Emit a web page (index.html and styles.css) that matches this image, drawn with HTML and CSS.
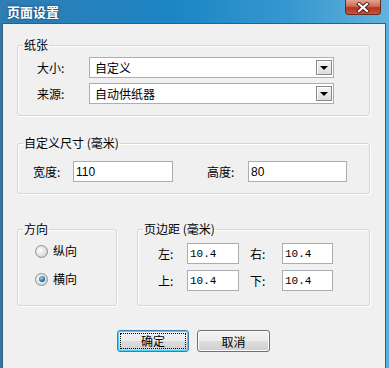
FILE: index.html
```html
<!DOCTYPE html>
<html lang="zh-CN">
<head>
    <meta charset="UTF-8" />
    <title>页面设置</title>
    <link rel="stylesheet" href="styles.css">
</head>
<body>
<div class="window">
    <div class="titlebar">
        <span class="title">页面设置</span>
        <span class="close-btn">
            <svg width="14" height="11" viewBox="0 0 14 11">
                <path d="M3 2 L11 9 M11 2 L3 9" stroke="#5a1a10" stroke-width="4" stroke-linecap="square"/>
                <path d="M3 2 L11 9 M11 2 L3 9" stroke="#ffffff" stroke-width="2.2" stroke-linecap="square"/>
            </svg>
        </span>
    </div>

    <div class="client">
        <!-- 纸张 -->
        <fieldset class="group">
            <legend>纸张</legend>
            <div class="paper-rows">
                <div class="row">
                    <span class="label paper-label">大小:</span>
                    <div class="combo">
                        <span class="combo-text">自定义</span>
                        <span class="combo-btn"><span class="arrow"></span></span>
                    </div>
                </div>
                <div class="row">
                    <span class="label paper-label">来源:</span>
                    <div class="combo">
                        <span class="combo-text">自动供纸器</span>
                        <span class="combo-btn"><span class="arrow"></span></span>
                    </div>
                </div>
            </div>
        </fieldset>

        <!-- 自定义尺寸 -->
        <fieldset class="group group-size">
            <legend>自定义尺寸 (毫米)</legend>
            <div class="size-row">
                <span class="label width-label">宽度:</span>
                <input class="textbox width-input" type="text" value="110">
                <span class="label height-label">高度:</span>
                <input class="textbox height-input" type="text" value="80">
            </div>
        </fieldset>

        <div class="bottom-groups">
            <!-- 方向 -->
            <fieldset class="group group-orient">
                <legend>方向</legend>
                <div class="radio-list">
                    <div class="radio-row">
                        <span class="radio"></span>
                        <span class="label">纵向</span>
                    </div>
                    <div class="radio-row">
                        <span class="radio checked"></span>
                        <span class="label">横向</span>
                    </div>
                </div>
            </fieldset>

            <!-- 页边距 -->
            <fieldset class="group group-margin">
                <legend>页边距 (毫米)</legend>
                <div class="margin-grid">
                    <span class="label">左:</span>
                    <input class="textbox num" type="text" value="10.4">
                    <span class="label right-label">右:</span>
                    <input class="textbox num" type="text" value="10.4">
                    <span class="label">上:</span>
                    <input class="textbox num" type="text" value="10.4">
                    <span class="label right-label">下:</span>
                    <input class="textbox num" type="text" value="10.4">
                </div>
            </fieldset>
        </div>

        <div class="buttons">
            <button class="btn btn-default"><span class="focus">确定</span></button>
            <button class="btn">取消</button>
        </div>
    </div>
</div>
</body>
</html>
```

FILE: styles.css
```css
:root {
    --client-bg: #f0f0f0;
    --group-line: #d5d5d5;
    --field-border: #a9adb4;
    --text: #000000;
}

html, body {
    margin: 0;
    padding: 0;
}

body {
    width: 389px;
    height: 368px;
    overflow: hidden;
    font-family: "Noto Sans CJK SC", "Liberation Sans", sans-serif;
    font-size: 12px;
    color: var(--text);
    background: var(--client-bg);
}

.window {
    width: 389px;
    height: 368px;
    box-sizing: border-box;
    padding: 0 3px 0 2px;
    background: linear-gradient(to right, #2d78ad, #1d83c2 45%, #3595ce 75%, #5eaedb);
    display: flex;
    flex-direction: column;
}

.titlebar {
    height: 23px;
    margin: 0 -3px 0 -2px;
    display: flex;
    justify-content: space-between;
    align-items: flex-start;
    background: linear-gradient(to right, #2f7db2, #1c85c5 45%, #3798d0 75%, #63b2dd);
}

.title {
    padding: 3px 0 0 7px;
    font-size: 13px;
    line-height: 18px;
    font-weight: bold;
    color: #ffffff;
    text-shadow: 0 0 3px rgba(20, 50, 80, 0.8);
}

.close-btn {
    width: 36px;
    height: 15px;
    margin-right: 8px;
    box-sizing: border-box;
    border: 1px solid #6b2a20;
    border-top: none;
    border-radius: 0 0 4px 4px;
    background: linear-gradient(to bottom, #e2a493, #cf6a56 45%, #b8321f 55%, #c9553d);
    display: flex;
    align-items: center;
    justify-content: center;
}

.client {
    flex: 1;
    background: var(--client-bg);
    border: 1px solid #3a5c74;
    border-bottom: none;
    padding: 13px 15px 0 14px;
}

/* group boxes */
.group {
    margin: 0;
    padding: 0;
    min-width: 0;
    border: 1px solid var(--group-line);
    border-radius: 3px;
    box-shadow: inset 1px 1px 0 #ffffff, 1px 1px 0 #ffffff;
}

.group legend {
    margin-left: 5px;
    padding: 0 1px;
    line-height: 16px;
}

.label {
    line-height: 16px;
    white-space: nowrap;
}

.paper-rows {
    padding: 4px 0 11px 19px;
    display: flex;
    flex-direction: column;
    gap: 5px;
}

.row {
    display: flex;
    align-items: center;
}

.paper-label {
    width: 52px;
}

.combo {
    width: 245px;
    height: 21px;
    box-sizing: border-box;
    border: 1px solid var(--field-border);
    background: #ffffff;
    display: flex;
    align-items: center;
    justify-content: space-between;
}

.combo-text {
    padding-left: 5px;
    line-height: 16px;
}

.combo-btn {
    width: 16px;
    height: 15px;
    margin-right: 1px;
    box-sizing: border-box;
    border: 1px solid #8a8a8a;
    box-shadow: inset 1px 1px 0 #ffffff;
    background: linear-gradient(to bottom, #f4f4f4, #dcdcdc);
    display: flex;
    align-items: center;
    justify-content: center;
}

.arrow {
    width: 0;
    height: 0;
    border-left: 4px solid transparent;
    border-right: 4px solid transparent;
    border-top: 4px solid #000000;
}

.group-size {
    margin-top: 19px;
}

.size-row {
    padding: 10px 0 11px 15px;
    display: flex;
    align-items: center;
}

.width-label {
    width: 40px;
}

.height-label {
    width: 41px;
    margin-left: 34px;
}

.textbox {
    height: 21px;
    box-sizing: border-box;
    margin: 0;
    padding: 0 0 0 2px;
    border: 1px solid var(--field-border);
    background: #ffffff;
    font-family: "Liberation Sans", sans-serif;
    font-size: 12px;
    color: var(--text);
    outline: none;
}

.width-input {
    width: 100px;
}

.height-input {
    width: 99px;
}

.bottom-groups {
    margin-top: 27px;
    display: flex;
    gap: 20px;
}

.group-orient {
    width: 100px;
    box-sizing: border-box;
}

.group-margin {
    width: 233px;
    box-sizing: border-box;
}

.radio-list {
    padding: 6px 0 0 17px;
    display: flex;
    flex-direction: column;
    gap: 12px;
}

.radio-row {
    display: flex;
    align-items: center;
    gap: 5px;
}

.radio {
    width: 13px;
    height: 13px;
    box-sizing: border-box;
    border-radius: 50%;
    border: 1px solid #8f8f8f;
    background: radial-gradient(circle at 40% 40%, #ffffff, #d8d8d8 70%, #bdbdbd);
    display: flex;
    align-items: center;
    justify-content: center;
}

.radio.checked::after {
    content: "";
    width: 6px;
    height: 6px;
    border-radius: 50%;
    background: radial-gradient(circle at 40% 35%, #9ad6f5, #1f6ea8 60%, #0e3f66);
}

.margin-grid {
    padding: 6px 0 14px 20px;
    display: grid;
    grid-template-columns: 29px 52px 43px 51px;
    row-gap: 6px;
    align-items: center;
}

.right-label {
    padding-left: 11px;
}

.num {
    width: 100%;
    font-family: "Liberation Mono", monospace;
    font-size: 11px;
}

/* buttons */
.buttons {
    margin-top: 24px;
    display: flex;
    justify-content: center;
    gap: 8px;
}

.btn {
    width: 73px;
    height: 22px;
    padding: 0;
    box-sizing: border-box;
    border: 1px solid #707070;
    border-radius: 3px;
    background: linear-gradient(to bottom, #f3f3f3, #ebebeb 50%, #dddddd 51%, #cfcfcf);
    box-shadow: inset 0 0 0 1px #fcfcfc;
    font-family: "Noto Sans CJK SC", sans-serif;
    font-size: 12px;
    color: var(--text);
    display: flex;
    align-items: center;
    justify-content: center;
}

.btn-default {
    width: 72px;
    border-color: #3c7fb1;
    box-shadow: inset 0 0 0 1px #48d0f8;
}

.focus {
    width: 66px;
    height: 16px;
    box-sizing: border-box;
    border: 1px dotted #000000;
    line-height: 14px;
}
```
